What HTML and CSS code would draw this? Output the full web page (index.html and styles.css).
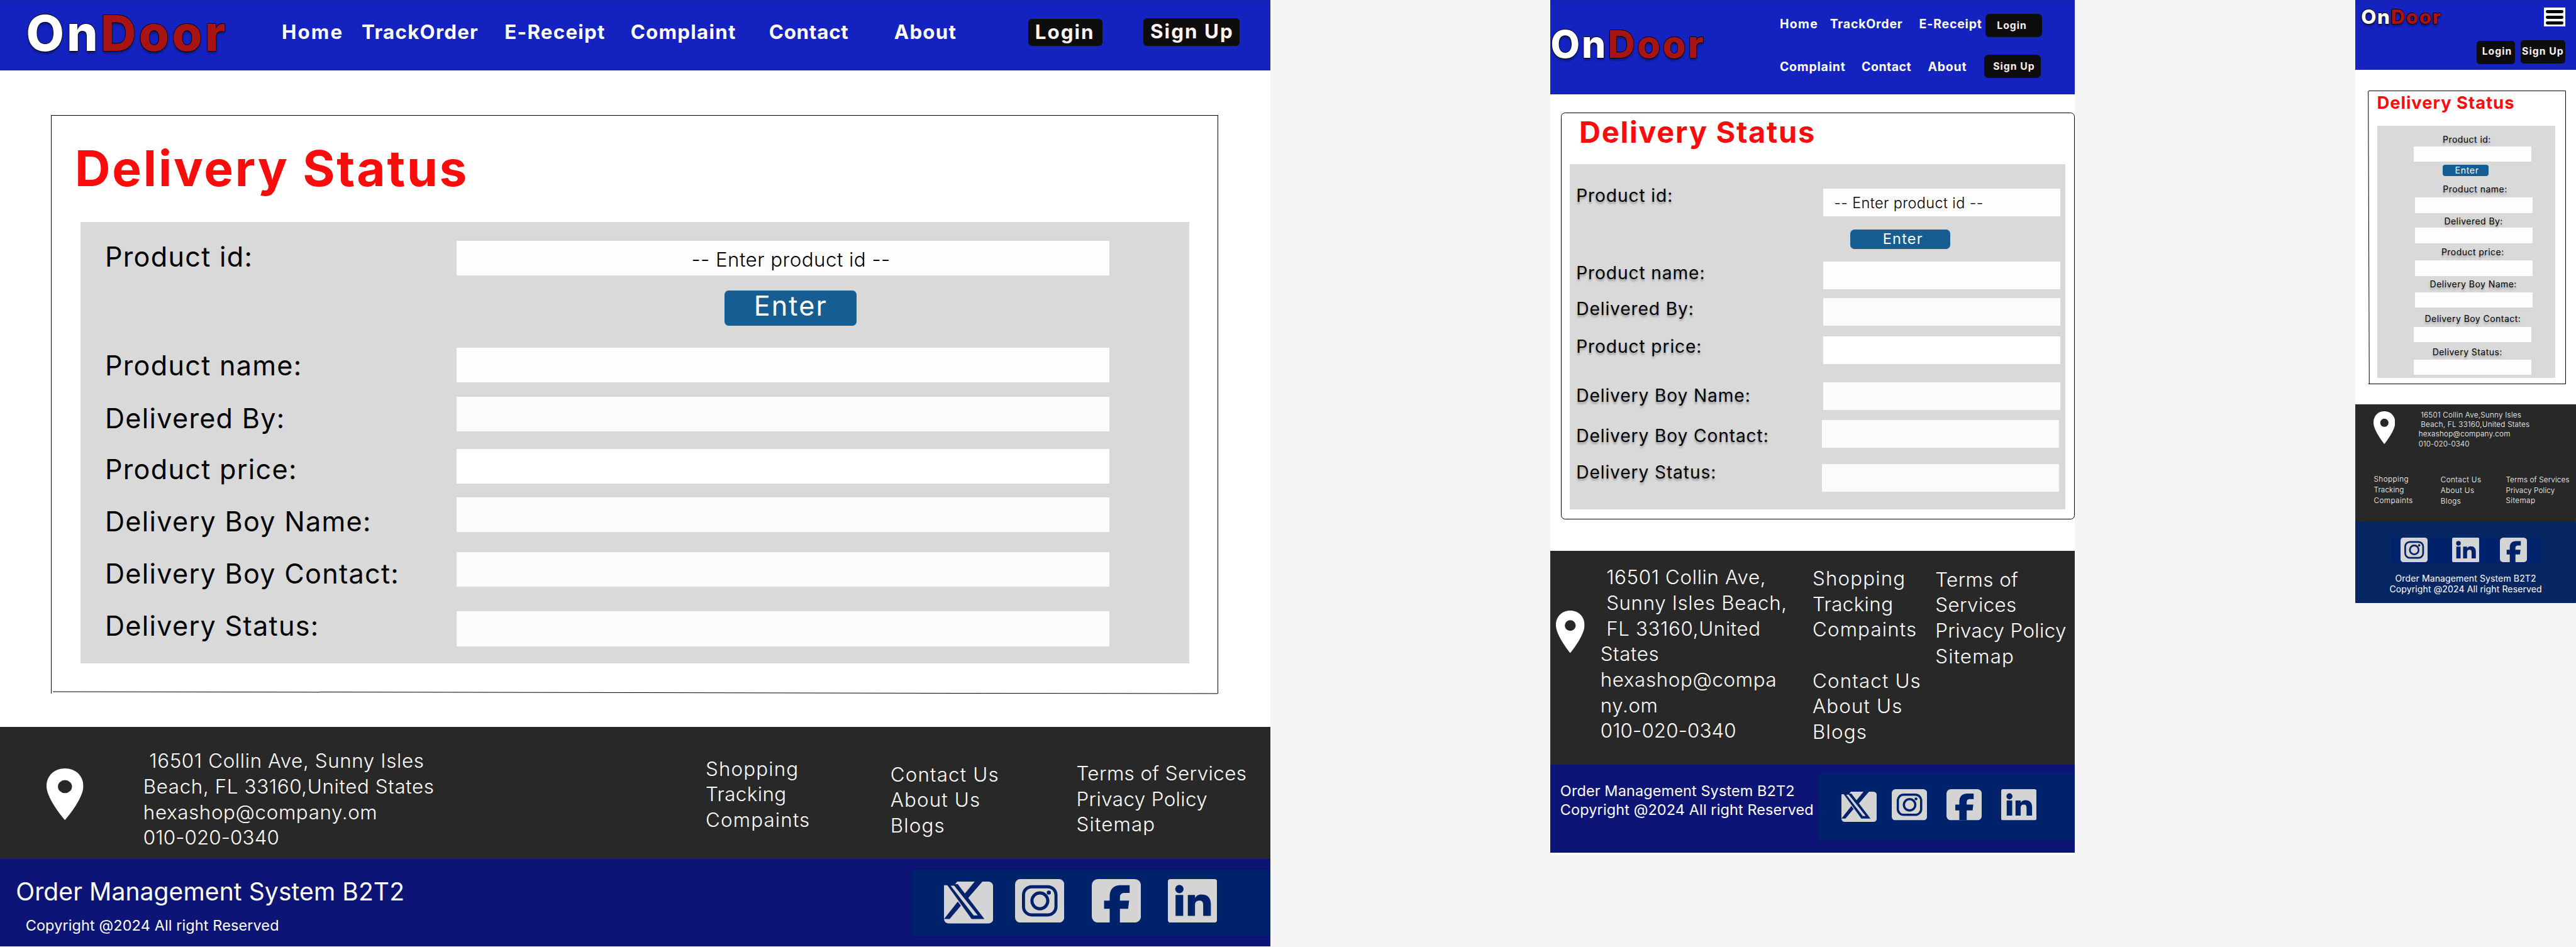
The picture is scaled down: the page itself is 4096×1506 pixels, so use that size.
FILE: index.html
```html
<!DOCTYPE html>
<html lang="en">
<head>
<meta charset="utf-8">
<title>OnDoor - Delivery Status</title>
<link rel="stylesheet" href="styles.css">
</head>
<body>
<svg class="sprite" aria-hidden="true">
  <symbol id="pin" viewBox="0 0 42 64" preserveAspectRatio="none">
    <path fill="#fff" fill-rule="evenodd" d="M21 0C9 0 0 9 0 22C0 38 21 64 21 64S42 38 42 22C42 9 33 0 21 0ZM21 14.500a8 8 0 1 1 0 16a8 8 0 1 1 0-16Z"/>
  </symbol>
  <symbol id="x" viewBox="0 0 96 82" preserveAspectRatio="none">
    <rect width="96" height="82" rx="9" fill="#d4d4d4"/>
    <g fill="#00226b">
      <path d="M0 0H26L20 7H0Z"/>
      <path d="M5 5H27L79 73H54Z"/>
      <path d="M60 0H75L43 37L37 28Z"/>
      <path d="M27 39L33 47L11 73H0Z"/>
    </g>
    <path fill="#d4d4d4" d="M13 8H20L66 66H58Z"/>
  </symbol>
  <symbol id="insta" viewBox="0 0 96 85" preserveAspectRatio="none">
    <rect width="96" height="85" rx="10" fill="#d4d4d4"/>
    <g fill="none" stroke="#00226b" stroke-width="6">
      <rect x="16.500" y="15" width="63.500" height="55" rx="16"/>
      <circle cx="48.500" cy="42.500" r="15.500"/>
    </g>
    <circle cx="66" cy="26.500" r="4" fill="#00226b"/>
  </symbol>
  <symbol id="fb" viewBox="0 0 96 85" preserveAspectRatio="none">
    <rect width="96" height="85" rx="12" fill="#d4d4d4"/>
    <path fill="#00226b" d="M35 85V58H24V42H35V34C35 20 43 12 56 12H74V27H64C58 27 55 30 55 35V42H73L71 58H55V85Z"/>
  </symbol>
  <symbol id="in" viewBox="0 0 96 85" preserveAspectRatio="none">
    <rect width="96" height="85" rx="5" fill="#d4d4d4"/>
    <g fill="#00226b">
      <circle cx="22.500" cy="19.500" r="8.200"/>
      <path d="M15 31H30V72H15Z"/>
      <path d="M39 31H53V37C56 32 60 30 66 30C78 30 84 37 84 49V72H69V51C69 45 67 42 62 42C56 42 53 45 53 51V72H39Z"/>
    </g>
  </symbol>
</svg>

<main class="board">

  <section class="frame desktop">
    <header class="top">
      <div class="logo">On<span>Door</span></div>
      <nav>
        <a class="t6">Home</a><a>TrackOrder</a><a>E-Receipt</a><a>Complaint</a><a class="t2">Contact</a><a>About</a>
      </nav>
      <a class="btn login">Login</a>
      <a class="btn signup">Sign Up</a>
    </header>
    <div class="card">
      <h1>Delivery Status</h1>
      <div class="panel">
        <div class="field f1"><label>Product id:</label><div class="input hint">-- Enter product id --</div></div>
        <div class="enter">Enter</div>
        <div class="field f2"><label>Product name:</label><div class="input"></div></div>
        <div class="field f3"><label>Delivered By:</label><div class="input"></div></div>
        <div class="field f4"><label>Product price:</label><div class="input"></div></div>
        <div class="field f5"><label>Delivery Boy Name:</label><div class="input"></div></div>
        <div class="field f6"><label>Delivery Boy Contact:</label><div class="input"></div></div>
        <div class="field f7"><label>Delivery Status:</label><div class="input"></div></div>
      </div>
    </div>
    <footer class="info">
      <svg class="pin"><use href="#pin"/></svg>
      <p class="address"> 16501 Collin Ave, Sunny Isles
Beach, FL 33160,United States
hexashop@company.om
<span class="t0">010-020-0340</span></p>
      <p class="links a">Shopping
<span class="t1">Tracking</span>
Compaints</p>
      <p class="links b">Contact Us
About Us
Blogs</p>
      <p class="links c"><span class="t1">Terms of Services</span>
<span class="t1">Privacy Policy</span>
Sitemap</p>
    </footer>
    <div class="legal">
      <div class="copy"><p class="oms">Order Management System B2T2</p><p class="rights">Copyright @2024 All right Reserved</p></div>
      <div class="social">
        <svg class="x"><use href="#x"/></svg><svg><use href="#insta"/></svg><svg><use href="#fb"/></svg><svg><use href="#in"/></svg>
      </div>
    </div>
  </section>

  <section class="frame tablet">
    <header class="top">
      <div class="logo">On<span>Door</span></div>
      <div class="menu">
        <nav class="r1"><a class="t6">Home</a><a>TrackOrder</a><a>E-Receipt</a><a class="btn login">Login</a></nav>
        <nav class="r2"><a>Complaint</a><a class="t2">Contact</a><a>About</a><a class="btn signup">Sign Up</a></nav>
      </div>
    </header>
    <div class="card">
      <h1>Delivery Status</h1>
      <div class="panel">
        <div class="field f1"><label>Product id:</label><div class="input hint">-- Enter product id --</div></div>
        <div class="enter">Enter</div>
        <div class="field f2"><label>Product name:</label><div class="input"></div></div>
        <div class="field f3"><label>Delivered By:</label><div class="input"></div></div>
        <div class="field f4"><label>Product price:</label><div class="input"></div></div>
        <div class="field f5"><label>Delivery Boy Name:</label><div class="input"></div></div>
        <div class="field f6"><label>Delivery Boy Contact:</label><div class="input"></div></div>
        <div class="field f7"><label>Delivery Status:</label><div class="input"></div></div>
      </div>
    </div>
    <footer class="info">
      <svg class="pin"><use href="#pin"/></svg>
      <p class="address"> 16501 Collin Ave,
 Sunny Isles Beach,
 FL 33160,United
States
hexashop@compa
ny.om
<span class="t0">010-020-0340</span></p>
      <p class="links a">Shopping
<span class="t1">Tracking</span>
Compaints

Contact Us
About Us
Blogs</p>
      <p class="links c"><span class="t1">Terms of</span>
<span class="t1">Services</span>
<span class="t1">Privacy Policy</span>
Sitemap</p>
    </footer>
    <div class="legal">
      <div class="copy"><p>Order Management System B2T2</p><p>Copyright @2024 All right Reserved</p></div>
      <div class="social">
        <svg class="x"><use href="#x"/></svg><svg><use href="#insta"/></svg><svg><use href="#fb"/></svg><svg><use href="#in"/></svg>
      </div>
    </div>
  </section>

  <section class="frame mobile">
    <header class="top">
      <div class="bar"><div class="logo">On<span>Door</span></div><div class="burger"><i></i><i></i><i></i></div></div>
      <div class="buttons"><a class="btn login">Login</a><a class="btn signup">Sign Up</a></div>
    </header>
    <div class="card">
      <h1>Delivery Status</h1>
      <div class="panel">
        <div class="field f1"><label>Product id:</label><div class="input"></div></div>
        <div class="enter">Enter</div>
        <div class="field f2"><label>Product name:</label><div class="input"></div></div>
        <div class="field f3"><label>Delivered By:</label><div class="input"></div></div>
        <div class="field f4"><label>Product price:</label><div class="input"></div></div>
        <div class="field f5"><label>Delivery Boy Name:</label><div class="input"></div></div>
        <div class="field f6"><label>Delivery Boy Contact:</label><div class="input"></div></div>
        <div class="field f7"><label>Delivery Status:</label><div class="input"></div></div>
      </div>
    </div>
    <footer class="info">
      <div class="where">
        <svg class="pin"><use href="#pin"/></svg>
        <p class="address"> 16501 Collin Ave,Sunny Isles
 Beach, FL 33160,United States
hexashop@company.com
<span class="t0">010-020-0340</span></p>
      </div>
      <div class="lists">
        <p class="links a">Shopping
<span class="t1">Tracking</span>
Compaints</p>
        <p class="links b">Contact Us
About Us
Blogs</p>
        <div class="links c"><p class="t1">Terms of Services
Privacy Policy</p><p class="last">Sitemap</p></div>
      </div>
    </footer>
    <div class="legal">
      <div class="social"><svg><use href="#insta"/></svg><svg><use href="#in"/></svg><svg><use href="#fb"/></svg></div>
      <div class="copy"><p>Order Management System B2T2</p><p>Copyright @2024 All right Reserved</p></div>
    </div>
  </section>
</main>
</body>
</html>
```
FILE: styles.css
```css
* { box-sizing: border-box; margin: 0; padding: 0; }

html { overflow: hidden; background: #f5f5f5; }
body {
  width: 5034px;
  height: 1850px;
  zoom: 0.81366;
  background: #f5f5f5;
  font-family: Inter, "Open Sans", sans-serif;
  overflow: hidden;
}
.sprite { display: none; }
.board { display: flex; align-items: flex-start; }
.frame { flex: none; background: #fff; }
.desktop { width: 2482px; height: 1850px; overflow: hidden; }
.tablet { width: 1024px; height: 1672px; margin-left: 548px; }
.mobile { width: 431px; margin-left: 549px; }

/* shared pieces */
.top { background: #1423bf; border: 1px solid #1420ab; border-width: 1px 0; }
.logo {
  font-weight: 800;
  letter-spacing: 0.052em;
  color: #fff;
  white-space: nowrap;
  text-shadow: 1px 0 #000, -1px 0 #000, 0 1px #000, 0 -1px #000, 0 5px 4px rgba(0, 0, 0, 0.35);
}
.logo span { color: #a81414; }
nav a { color: #fff; font-weight: 700; letter-spacing: 0.04em; white-space: nowrap; }
nav a.t6 { letter-spacing: 0.068em; }
nav a.t2 { letter-spacing: 0.024em; }
.btn, nav a.btn {
  display: block;
  flex: none;
  background: #0d0d0d;
  color: #fff3f3;
  font-weight: 700;
  letter-spacing: 0.066em;
  white-space: nowrap;
}
h1 { color: #fa0c0c; font-weight: 700; letter-spacing: 0.036em; white-space: nowrap; }
.panel { background: #d9d9d9; }
label { display: block; letter-spacing: 0.03em; white-space: nowrap; color: #000; }
.input { background: #fffcfd; flex: none; }
.hint { font-weight: 350; letter-spacing: 0.015em; white-space: nowrap; color: #000; }
.enter { background: #165e91; color: #fff; text-align: center; letter-spacing: 0.05em; }
.info { background: #282828; color: #fff; }
.address, .links { font-weight: 300; letter-spacing: 0.02em; white-space: pre; }
.links { letter-spacing: 0.037em; }
.links .t1 { letter-spacing: 0.013em; }
.address .t0 { letter-spacing: 0.004em; }
.pin { display: block; }
.legal { background: #0c1576; color: #fff; letter-spacing: 0.007em; }
.copy { white-space: nowrap; }
.social { background: #00226b; display: flex; align-items: flex-start; }
.social svg { display: block; flex: none; }
.desktop .f3 .input, .desktop .f6 .input, .tablet .f3 .input, .tablet .f6 .input { background: #fbfbfb; }
.desktop .f4 .input, .tablet .f4 .input { background: #fff; }
.desktop .f5 .input, .tablet .f5 .input { background: #fcfcfc; }
.desktop .f7 .input, .tablet .f7 .input { background: #fcfbf9; }

/* desktop */
.desktop .top { display: flex; height: 138px; align-items: flex-start; }
.desktop .logo { width: 550.600px; padding: 14px 0 0 51px; font-size: 96.300px; line-height: 100px; flex: none; }
.desktop nav {
  display: grid;
  grid-template-columns: 156.200px 279.200px 246.300px 270.500px 244.600px 262.600px;
  margin-top: 38px;
  font-size: 38.500px;
  line-height: 48px;
}
.desktop .btn { font-size: 38.500px; line-height: 52px; border-radius: 7px; }
.desktop .login { width: 144px; height: 53px; margin-top: 36px; padding-left: 12.600px; }
.desktop .signup { width: 187px; height: 54px; margin: 35px 0 0 81px; padding-left: 13px; }
.desktop .card {
  position: relative;
  width: 2282px;
  height: 1131px;
  margin: 87px 0 0 99px;
  border: 1px solid #000;
  border-bottom: 0;
}
.desktop .card::after {
  content: "";
  position: absolute;
  left: 3px;
  right: 0;
  bottom: 1px;
  border-top: 1px solid #000;
  transform: rotate(0.1deg);
}
.desktop h1 { margin: 43px 0 0 46px; font-size: 96.300px; line-height: 120px; }
.desktop .panel { width: 2167px; height: 862px; margin: 45px 0 0 57px; padding: 36px 0 0 48px; }
.desktop .field { display: flex; align-items: flex-start; height: 68px; }
.desktop label { width: 687px; font-size: 53px; line-height: 68px; }
.desktop .input { width: 1276px; height: 68px; }
.desktop .hint { padding-left: 459px; font-size: 38.500px; line-height: 75px; }
.desktop .enter { width: 258px; height: 68px; margin: 30px 0 0 1211px; border-radius: 8px; font-size: 53px; line-height: 60px; }
.desktop .f1 label { margin-top: -2px; }
.desktop .f2 { margin-top: 43px; }
.desktop .f2 label { margin-top: 2px; }
.desktop .f3 { margin-top: 28px; }
.desktop .f3 label { margin-top: 9px; }
.desktop .f4 { margin-top: 34px; }
.desktop .f4 label { margin-top: 6px; }
.desktop .f5 { margin-top: 27px; }
.desktop .f5 label { margin-top: 14px; }
.desktop .f6 { margin-top: 39px; }
.desktop .f6 label { margin-top: 9px; }
.desktop .f7 { margin-top: 48px; }
.desktop .f7 label { margin-top: -5px; }
.desktop .info {
  display: grid;
  grid-template-columns: 280px 1099px 361px 363.500px 1fr;
  height: 258px;
  margin-top: 65px;
  font-size: 38.500px;
  line-height: 50px;
}
.desktop .pin { width: 72px; height: 101px; margin: 81px 0 0 91px; }
.desktop .address { padding-top: 42px; }
.desktop .a { padding-top: 57px; }
.desktop .b { padding-top: 68px; }
.desktop .c { padding-top: 66px; }
.desktop .legal { display: flex; height: 172px; }
.desktop .copy { width: 1782px; flex: none; }
.desktop .oms { padding: 34px 0 0 31px; font-size: 48px; line-height: 60px; }
.desktop .rights { padding: 18px 0 0 50px; font-size: 28.900px; line-height: 36px; }
.desktop .social { width: 700px; height: 130px; margin-top: 21px; padding: 18px 0 0 63px; }
.desktop .social svg { width: 96px; height: 85px; margin-right: 53px; }
.desktop .social svg.x { height: 82px; margin: 5px 43px 0 0; }

/* tablet */
.tablet .top { display: flex; height: 184px; }
.tablet .logo { width: 448px; padding-top: 46px; font-size: 74px; line-height: 80px; flex: none; }
.tablet nav { display: grid; font-size: 24px; line-height: 30px; align-items: start; }
.tablet .r1 { grid-template-columns: 98px 174.500px 130px 110px; padding-top: 26px; height: 80px; }
.tablet .r2 { grid-template-columns: 160px 129.500px 110.500px 110px; padding-top: 26px; }
.tablet nav a { margin-top: 5px; }
.tablet .r2 a { margin-top: 8px; }
.tablet nav .btn { height: 45px; margin-top: 0; padding-left: 22px; border-radius: 8px; font-size: 19.300px; line-height: 46px; }
.tablet nav .signup { padding-left: 17px; }
.tablet .card { width: 1003px; height: 795px; margin: 36px 0 0 21px; border: 1px solid #000; border-radius: 8px; }
.tablet h1 { margin: 3px 0 0 34px; font-size: 57.800px; line-height: 70px; }
.tablet .panel { width: 968px; height: 674px; margin: 27px 0 0 16px; padding: 48px 0 0 12px; }
.tablet .field { display: flex; align-items: flex-start; height: 54px; }
.tablet label { width: 483px; font-size: 34.700px; line-height: 54px; text-shadow: 0 4px 4px rgba(0, 0, 0, 0.3); }
.tablet .input { width: 463px; height: 54px; }
.tablet .hint { padding-left: 21px; font-size: 28.900px; line-height: 56px; }
.tablet .enter { width: 195px; height: 37px; margin: 26px 0 0 536px; padding-left: 10px; border-radius: 8px; font-size: 28.900px; line-height: 36px; }
.tablet .f1 label { margin-top: -13px; }
.tablet .f2 { margin-top: 25px; }
.tablet .f2 label { margin-top: -4px; }
.tablet .f3 { margin-top: 18px; }
.tablet .f3 label { margin-top: -5px; }
.tablet .f4 { margin-top: 21px; }
.tablet .f4 label { margin-top: -7px; }
.tablet .f5 { margin-top: 35px; }
.tablet .f6 { margin-top: 20px; }
.tablet .f6 label { margin-top: 5px; }
.tablet .f7 { margin-top: 32px; }
.tablet .f7 label { margin-top: -10px; }
.tablet .f6 label, .tablet .f7 label { width: 480.500px; }
.tablet .info {
  display: grid;
  grid-template-columns: 97.500px 414.500px 240px 1fr;
  height: 417px;
  margin-top: 62px;
  font-size: 38.500px;
  line-height: 50px;
}
.tablet .pin { width: 56px; height: 83px; margin: 117px 0 0 11px; }
.tablet .address { padding-top: 27px; }
.tablet .a { padding-top: 29px; }
.tablet .c { padding-top: 31px; }
.tablet .legal { display: flex; height: 172px; }
.tablet .copy { width: 523px; flex: none; padding: 34px 0 0 19px; font-size: 28.900px; line-height: 36px; }
.tablet .social { width: 501px; height: 130px; margin-top: 18px; padding: 31px 0 0 45px; }
.tablet .social svg { width: 69px; height: 61px; margin-right: 38px; }
.tablet .social svg.x { height: 59px; margin: 4px 30px 0 0; }

/* mobile */
.mobile .top { height: 137px; }
.mobile .bar { display: flex; justify-content: space-between; padding: 12px 21px 0 11px; }
.mobile .logo { font-size: 38.500px; line-height: 40px; }
.burger {
  display: flex;
  flex-direction: column;
  justify-content: space-between;
  width: 42px;
  height: 38px;
  margin-top: 1px;
  padding: 5px 4px 4px;
  background: #fff;
}
.burger i { height: 6px; border-radius: 3px; background: #000; }
.mobile .buttons { display: flex; justify-content: flex-end; gap: 11px; margin-top: 26px; padding-right: 21px; }
.mobile .btn { height: 45px; border-radius: 6px; font-size: 19.300px; line-height: 45px; }
.mobile .login { width: 75px; margin-top: 1px; padding-left: 10.500px; line-height: 43px; }
.mobile .signup { width: 87px; padding-left: 2.500px; }
.mobile .card {
  position: relative;
  width: 386px;
  height: 574px;
  margin: 40px 0 0 25px;
  border: 1px solid #000;
  border-left: 0;
}
.mobile .card::before {
  content: "";
  position: absolute;
  left: 0;
  top: 0;
  bottom: 0;
  border-left: 1px solid #000;
  transform: rotate(-0.2deg);
}
.mobile h1 { margin: 2px 0 0 17px; font-size: 33.700px; line-height: 40px; }
.mobile .panel { width: 348px; height: 494px; margin: 25px 0 0 18px; padding-top: 16.400px; }
.mobile label { margin-bottom: 2.600px; font-size: 17.300px; line-height: 22px; text-shadow: 0 4px 4px rgba(0, 0, 0, 0.3); }
.mobile .input { width: 230px; height: 30px; margin-left: 73px; }
.mobile .enter { width: 89px; height: 22px; margin: 6px 0 0 128px; padding-left: 5px; border-radius: 5px; font-size: 17.300px; line-height: 21px; }
.mobile .f1 label { margin-left: 127.600px; }
.mobile .f2 { margin-top: 14.700px; }
.mobile .f2 label { margin: 0 0 5.300px 128px; }
.mobile .f3 { margin-top: 5.400px; }
.mobile .f3 label { margin: 0 0 1.600px 130.500px; }
.mobile .f4 { margin-top: 6.700px; }
.mobile .f4 label { margin: 0 0 5.300px 125px; }
.mobile .f5 { margin-top: 5.700px; }
.mobile .f5 label { margin: 0 0 4.300px 102.500px; }
.mobile .f6 { margin-top: 10.700px; }
.mobile .f6 label { margin: 0 0 5.300px 92.500px; }
.mobile .f7 { margin-top: 8.700px; }
.mobile .f7 label { margin: 0 0 3.300px 107.500px; }
.mobile .f1 .input, .mobile .f6 .input, .mobile .f7 .input { margin-left: 71px; }
.mobile .info { height: 229px; margin-top: 39px; padding-top: 12px; font-size: 14.400px; }
.mobile .where { display: flex; height: 125px; line-height: 19px; }
.mobile .pin { width: 42.500px; height: 64px; margin: 2px 46px 0 35px; }
.mobile .lists { display: grid; grid-template-columns: 130.500px 127.500px 1fr; padding-left: 36px; line-height: 21px; }
.mobile .b, .mobile .c { padding-top: 1px; }
.mobile .last { margin-top: -2px; }
.mobile .legal { height: 160px; padding-top: 32px; background: #072763; border-radius: 1px; }
.mobile .social { width: 291px; height: 50px; margin-left: 70px; padding-left: 18.500px; }
.mobile .social svg { width: 53px; height: 48px; margin-right: 47px; }
.mobile .social svg:nth-child(2) { margin-right: 41px; }
.mobile .copy { margin-top: 19px; text-align: center; font-size: 17.300px; line-height: 21px; }
```
